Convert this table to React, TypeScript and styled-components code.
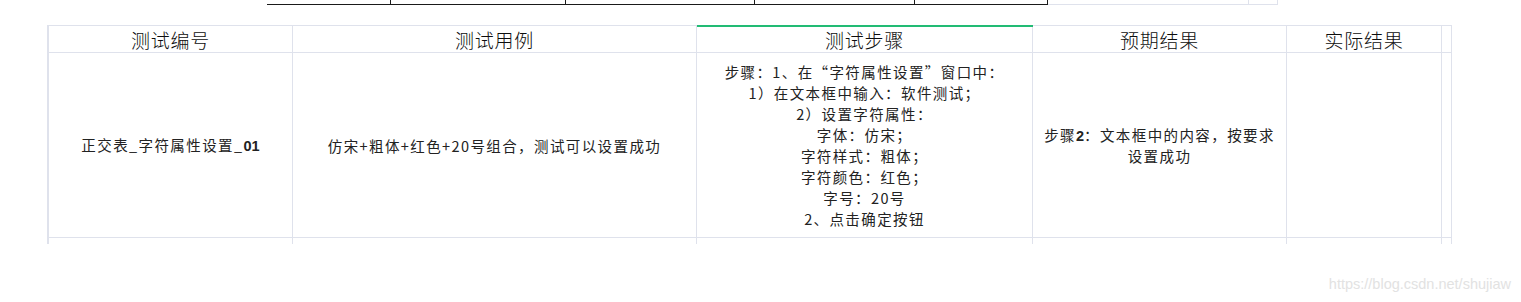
import React from "react";
import styled, { createGlobalStyle } from "styled-components";

const Global = createGlobalStyle`
  html, body { margin: 0; padding: 0; background: #ffffff; }
  body { font-family: "Noto Sans CJK SC", "Noto Sans", sans-serif; color: #1f1f1f; }
`;

const GRID = "#dfe2ec";

const Page = styled.div`
  width: 1521px;
  height: 302px;
  overflow: hidden;
  display: flex;
  flex-direction: column;
`;

const TopStrip = styled.div`
  display: flex;
  margin-left: 267px;
  height: 5px;
`;

const StripCell = styled.div<{ $w: number; $light?: boolean }>`
  width: ${(p) => p.$w}px;
  box-sizing: border-box;
  height: 5px;
  border-bottom: 1px solid ${(p) => (p.$light ? GRID : "#1a1a1a")};
  border-right: 1px solid ${(p) => (p.$light ? GRID : "#1a1a1a")};
`;

const Table = styled.div`
  margin-top: 20px;
  margin-left: 47px;
  display: grid;
  grid-template-columns: 244px 404px 336px 254px 155px 10px;
  grid-template-rows: 27px 185px 6px;
  border-top: 1px solid ${GRID};
  border-left: 2px solid ${GRID};
  width: max-content;
`;

const Cell = styled.div<{ $open?: boolean; $selected?: boolean }>`
  box-sizing: border-box;
  border-right: 1px solid ${GRID};
  border-bottom: ${(p) => (p.$open ? "none" : `1px solid ${GRID}`)};
  display: flex;
  align-items: center;
  justify-content: center;
  text-align: center;
  position: relative;
  ${(p) =>
    p.$selected &&
    `&::before { content: ""; position: absolute; left: 0; right: -1px; top: -1px; height: 2px; background: #22bb74; }`}
`;

const HeadText = styled.span`
  font-size: 19px;
  font-weight: 300;
  letter-spacing: 0.8px;
  color: #0d0d0d;
  line-height: 26px;
  padding-top: 1px;
`;

const BodyText = styled.div<{ $lh?: number }>`
  font-size: 14.5px;
  letter-spacing: 1.4px;
  line-height: ${(p) => p.$lh ?? 21}px;
  color: #222;
  white-space: pre-line;
`;

const Bold = styled.span`
  font-family: "Liberation Sans", "Noto Sans", sans-serif;
  font-weight: 700;
  letter-spacing: 0;
`;

const Footer = styled.div`
  display: flex;
  justify-content: flex-end;
  padding-right: 10px;
  margin-top: 32px;
`;

const Watermark = styled.span`
  font-family: "Liberation Sans", Arial, sans-serif;
  font-size: 14.5px;
  color: #e2e2e2;
`;

const headers = ["测试编号", "测试用例", "测试步骤", "预期结果", "实际结果", ""];

const steps = [
  "步骤：1、在“字符属性设置”窗口中：",
  "1）在文本框中输入：软件测试；",
  "2）设置字符属性：",
  "字体：仿宋；",
  "字符样式：粗体；",
  "字符颜色：红色；",
  "字号：20号",
  "2、点击确定按钮",
];

export default function App() {
  return (
    <Page>
      <Global />
      <TopStrip>
        <StripCell $w={124} />
        <StripCell $w={175} />
        <StripCell $w={189} />
        <StripCell $w={160} />
        <StripCell $w={133} />
        <StripCell $w={201} $light />
        <StripCell $w={29} $light />
      </TopStrip>
      <Table>
        {headers.map((h, i) => (
          <Cell key={h + i} $selected={i === 2}>
            {h && <HeadText>{h}</HeadText>}
          </Cell>
        ))}
        <Cell>
          <BodyText>
            正交表_字符属性设置_<Bold>01</Bold>
          </BodyText>
        </Cell>
        <Cell>
          <BodyText>仿宋+粗体+红色+20号组合，测试可以设置成功</BodyText>
        </Cell>
        <Cell>
          <BodyText>{steps.join("\n")}</BodyText>
        </Cell>
        <Cell>
          <BodyText $lh={20}>
            步骤<Bold>2</Bold>：文本框中的内容，按要求{"\n"}设置成功
          </BodyText>
        </Cell>
        <Cell />
        <Cell />
        {headers.map((h, i) => (
          <Cell key={"e" + i} $open />
        ))}
      </Table>
      <Footer>
        <Watermark>https://blog.csdn.net/shujiaw</Watermark>
      </Footer>
    </Page>
  );
}
